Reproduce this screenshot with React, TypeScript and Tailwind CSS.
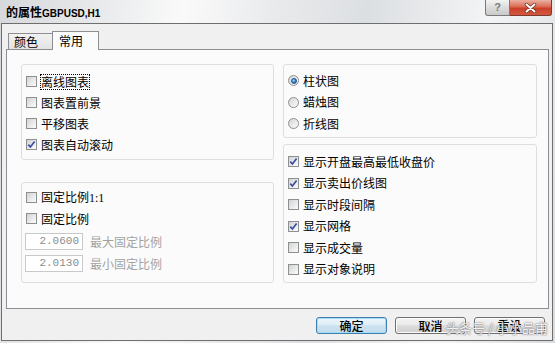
import React from "react";

function CheckBox({ checked }: { checked?: boolean }) {
  return (
    <span className="relative flex h-[11px] w-[11px] shrink-0 items-center justify-center border border-[#8e8f8f] bg-[linear-gradient(135deg,#cfd2d6_0%,#e9eaeb_55%,#fbfbfb_100%)]">
      {checked && (
        <svg width="9" height="9" viewBox="0 0 9 9" className="relative">
          <path d="M1.3 4.6 L3.4 7 L7.6 1.4" fill="none" stroke="#3b4da3" strokeWidth="1.7" />
        </svg>
      )}
    </span>
  );
}

function Radio({ checked }: { checked?: boolean }) {
  return (
    <span className="flex h-[11px] w-[11px] shrink-0 items-center justify-center rounded-full border border-[#8e8f8f] bg-[linear-gradient(135deg,#cfd2d6_0%,#ececec_55%,#fbfbfb_100%)]">
      {checked && (
        <span className="h-[6px] w-[6px] rounded-full border border-[#1e4f8a] bg-[radial-gradient(circle_at_35%_35%,#9fd8f8_0%,#3a86cc_55%,#1b56a0_100%)]" />
      )}
    </span>
  );
}

function CRow({ label, checked, focus }: { label: React.ReactNode; checked?: boolean; focus?: boolean }) {
  return (
    <div className="flex h-[21px] items-center gap-[3px]">
      <CheckBox checked={checked} />
      <span
        className={
          focus
            ? "border border-dotted border-black leading-[14px]"
            : "border border-transparent leading-[14px]"
        }
      >
        {label}
      </span>
    </div>
  );
}

function CRowR({ label, checked }: { label: string; checked?: boolean }) {
  return (
    <div className="flex h-[21.5px] items-center gap-[4px]">
      <CheckBox checked={checked} />
      <span className="leading-[14px]">{label}</span>
    </div>
  );
}

function RRow({ label, checked }: { label: string; checked?: boolean }) {
  return (
    <div className="flex h-[21.5px] items-center gap-[4px]">
      <Radio checked={checked} />
      <span className="leading-[14px]">{label}</span>
    </div>
  );
}

function Field({ value, label, top }: { value: string; label: string; top: string }) {
  return (
    <div className={"flex h-[17px] items-center " + top}>
      <div className="ml-[-1px] flex h-[17px] w-[58px] items-center justify-end border border-[#c9c9c9] bg-white pr-[3px] font-['Liberation_Mono',monospace] text-[11px] text-[#8c8c8c]">
        {value}
      </div>
      <span className="ml-[7px] text-[#a3a3a3]">{label}</span>
    </div>
  );
}

function Btn({ label, def }: { label: string; def?: boolean }) {
  return (
    <div
      className={
        def
          ? "flex h-[17px] w-[71px] items-center justify-center rounded-[3px] border border-[#3c7fb1] bg-[linear-gradient(#eef6fb_0%,#dfeef7_45%,#cde3f1_50%,#c2dbeb_100%)] shadow-[inset_0_0_0_1px_#a8dcf6] text-[12px] font-medium leading-none"
          : "flex h-[17px] w-[71px] items-center justify-center rounded-[3px] border border-[#707070] bg-[linear-gradient(#f3f3f3_0%,#ebebeb_45%,#dddddd_50%,#cfcfcf_100%)] shadow-[inset_0_0_0_1px_#fbfbfb] text-[12px] font-medium leading-none"
      }
    >
      {label}
    </div>
  );
}

export default function App() {
  return (
    <div className="relative flex h-[343px] w-[555px] flex-col overflow-hidden bg-[linear-gradient(100deg,#d6d8db_0%,#e6e8ea_15%,#fafafa_30%,#e9eaec_45%,#dcdfe2_60%,#f3f4f5_80%,#d9dcdf_100%)] font-['Noto_Sans_CJK_SC','Noto_Sans',sans-serif] text-[12px] text-black">
      {/* title bar */}
      <div className="flex h-[23px] shrink-0 items-start justify-between">
        <div className="flex items-baseline pl-[6px] pt-[4px] font-bold leading-[16px]">
          <span className="text-[12px]">的属性</span>
          <span className="font-['Liberation_Sans',sans-serif] text-[10px]">GBPUSD,H1</span>
        </div>
        <div className="flex items-start pr-[3px]">
          <div className="flex h-[16px] w-[25px] items-center justify-center rounded-bl-[3px] border border-t-0 border-[#7a7a7a] bg-[linear-gradient(#f4f4f4_0%,#dcdcdc_50%,#c9c9c9_100%)] font-['Liberation_Sans',sans-serif] text-[11px] font-bold leading-none text-[#7b7b7b]">
            ?
          </div>
          <div className="flex h-[16px] w-[42px] items-center justify-center rounded-br-[3px] border border-l-0 border-t-0 border-[#7a3a30] bg-[linear-gradient(#eab1a3_0%,#dc6a52_45%,#c9402a_55%,#d4583e_100%)]">
            <svg width="13" height="10" viewBox="0 0 13 10">
              <path d="M2.5 1.5 L10.5 8.5 M10.5 1.5 L2.5 8.5" stroke="#6a2a20" strokeWidth="3.4" strokeLinecap="round" />
              <path d="M2.5 1.5 L10.5 8.5 M10.5 1.5 L2.5 8.5" stroke="#ffffff" strokeWidth="2" strokeLinecap="round" />
            </svg>
          </div>
        </div>
      </div>

      {/* client area */}
      <div className="mb-[2px] ml-[1px] mr-[2px] flex flex-1 flex-col border border-[#6e6e6e] bg-[#f0f0f0] pl-[4px] pr-[3px] pt-[7px]">
        {/* tabs */}
        <div className="flex h-[18px] items-end">
          <div className="ml-[2px] flex h-[16px] w-[46px] items-center border border-b-0 border-[#8c8e94] bg-[linear-gradient(#f2f2f2,#e3e3e3)] pl-[5px] pt-[1px] leading-none">
            颜色
          </div>
          <div className="relative z-10 -ml-[2px] flex h-[19px] w-[47px] translate-y-[1px] items-start self-end border border-b-0 border-[#8c8e94] bg-[#fbfbfb] pl-[6px] pt-[2px] leading-[14px]">
            常用
          </div>
        </div>

        {/* panel */}
        <div className="flex h-[260px] gap-[9px] border border-[#8c8e94] bg-[#fbfbfb] pl-[14px] pr-[11px] pt-[14px]">
          {/* left column */}
          <div className="flex w-[253px] flex-col">
            <div className="h-[96px] rounded-[3px] border border-[#dcdfe2] pl-[4px] pt-[6px]">
              <CRow label="离线图表" focus />
              <CRow label="图表置前景" />
              <CRow label="平移图表" />
              <CRow label="图表自动滚动" checked />
            </div>
            <div className="mt-[22px] h-[101px] rounded-[3px] border border-[#dcdfe2] pl-[4px] pt-[4px]">
              <CRow
                label={
                  <>
                    固定比例<span className="font-['Liberation_Serif',serif] text-[12px]">1:1</span>
                  </>
                }
              />
              <CRow label="固定比例" />
              <Field value="2.0600" label="最大固定比例" top="mt-[4px]" />
              <Field value="2.0130" label="最小固定比例" top="mt-[5px]" />
            </div>
          </div>

          {/* right column */}
          <div className="flex w-[254px] flex-col">
            <div className="h-[74px] rounded-[3px] border border-[#dcdfe2] pl-[4px] pt-[5px]">
              <RRow label="柱状图" checked />
              <RRow label="蜡烛图" />
              <RRow label="折线图" />
            </div>
            <div className="mt-[6px] h-[139px] rounded-[3px] border border-[#dcdfe2] pl-[4px] pt-[6px]">
              <CRowR label="显示开盘最高最低收盘价" checked />
              <CRowR label="显示卖出价线图" checked />
              <CRowR label="显示时段间隔" />
              <CRowR label="显示网格" checked />
              <CRowR label="显示成交量" />
              <CRowR label="显示对象说明" />
            </div>
          </div>
        </div>

        {/* buttons */}
        <div className="mt-[8px] flex justify-end gap-[8px] pr-[4px]">
          <Btn label="确定" def />
          <Btn label="取消" />
          <Btn label="重设" />
        </div>
      </div>

      {/* watermark */}
      <div className="absolute left-[446px] top-[320px] whitespace-nowrap text-[13px] leading-[16px] text-white/90 [text-shadow:0_0_1px_#666,0_0_2px_#888]">
        头条号 / 小小品甫
      </div>
    </div>
  );
}
